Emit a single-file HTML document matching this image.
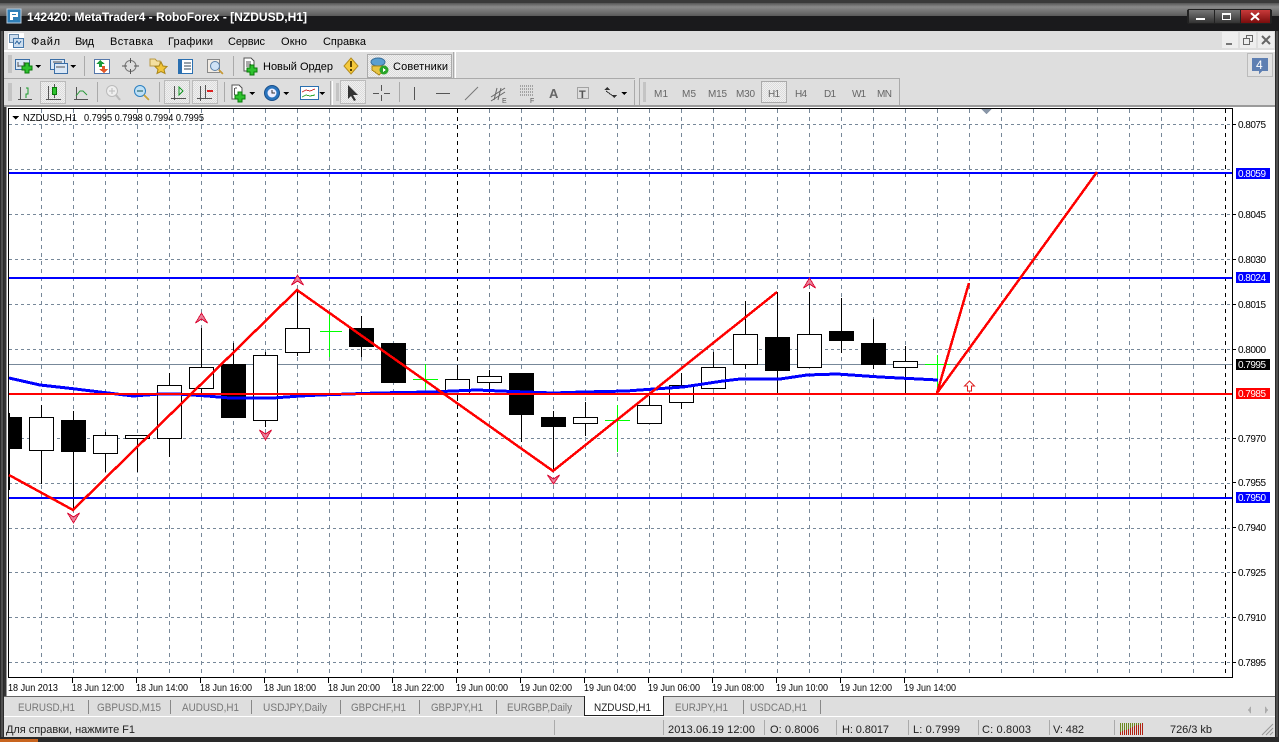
<!DOCTYPE html>
<html><head><meta charset="utf-8"><style>
html,body{margin:0;padding:0;background:#222;}
svg{display:block;}
text{font-family:"Liberation Sans",sans-serif;}
.m{font-size:11px;fill:#000;}
.p{font-size:10px;fill:#000;}
.t{font-size:10px;fill:#000;}
.tab{font-size:11px;fill:#777;}
.s{font-size:11px;fill:#222;}
.tf{font-size:10px;fill:#666;}
.w{fill:#fff;stroke:#000;stroke-width:1;}
.b{fill:#000;stroke:#000;stroke-width:1;}
</style></head><body>
<svg xmlns="http://www.w3.org/2000/svg" width="1279" height="742" viewBox="0 0 1279 742" shape-rendering="crispEdges">
<defs>
<linearGradient id="tb" x1="0" y1="0" x2="0" y2="1"><stop offset="0" stop-color="#555"/><stop offset=".3" stop-color="#8a8a8a"/><stop offset=".98" stop-color="#5c5c5c"/><stop offset="1" stop-color="#1e1e1e"/></linearGradient>
<pattern id="ck" width="2" height="2" patternUnits="userSpaceOnUse"><rect width="2" height="2" fill="#f0f0f0"/><rect width="1" height="1" fill="#dcdcdc"/><rect x="1" y="1" width="1" height="1" fill="#dcdcdc"/></pattern>
<linearGradient id="rd" x1="0" y1="0" x2="0" y2="1"><stop offset="0" stop-color="#c83a3a"/><stop offset="1" stop-color="#7a0c0c"/></linearGradient>
<linearGradient id="gb" x1="0" y1="0" x2="0" y2="1"><stop offset="0" stop-color="#777"/><stop offset="1" stop-color="#333"/></linearGradient>
</defs>
<rect width="1279" height="742" fill="#252525"/>
<rect x="0" y="0" width="1279" height="3" fill="#3a3a3a"/>
<rect x="0" y="3" width="1279" height="13" fill="url(#tb)"/>
<rect x="0" y="16" width="1279" height="15" fill="#1a1a1c"/>
<!-- title -->
<rect x="7" y="9" width="14" height="14" fill="#2f7fb8" stroke="#bcd" stroke-width="1"/>
<path d="M10 12h8v5h-5v3h-3z M12 14v1h4v-1z" fill="#fff" fill-rule="evenodd"/>
<text x="27" y="21" font-size="12" font-weight="bold" fill="#fff" textLength="280" lengthAdjust="spacingAndGlyphs">142420: MetaTrader4 - RoboForex - [NZDUSD,H1]</text>
<!-- window buttons -->
<rect x="1187" y="9" width="85" height="15" fill="#222" rx="2"/>
<rect x="1189" y="10" width="25" height="13" fill="url(#gb)"/>
<rect x="1196" y="18" width="9" height="2" fill="#fff"/>
<rect x="1215" y="10" width="25" height="13" fill="url(#gb)"/>
<rect x="1222.500" y="13.500" width="8" height="6" fill="none" stroke="#fff" stroke-width="1"/><rect x="1222" y="13" width="9" height="2" fill="#fff"/>
<rect x="1241" y="10" width="29" height="13" fill="url(#rd)"/>
<path d="M1251 13l8 7M1259 13l-8 7" stroke="#fff" stroke-width="2" fill="none" shape-rendering="auto"/>
<!-- menu bar -->
<rect x="4" y="31" width="1271" height="20" fill="#dedede"/>
<rect x="4" y="50" width="1271" height="2" fill="#fff"/>
<rect x="8" y="33" width="16" height="16" fill="#fff"/>
<rect x="9.500" y="34.500" width="9" height="8" fill="#cde" stroke="#68a" stroke-width="1"/>
<rect x="13.500" y="38.500" width="10" height="9" fill="#cde" stroke="#47a" stroke-width="1"/>
<path d="M15 44l2-3 2 3 2-3" stroke="#47a" fill="none"/>
<text class="m" x="31" y="45" textLength="29">Файл</text>
<text class="m" x="75" y="45" textLength="19">Вид</text>
<text class="m" x="110" y="45" textLength="43">Вставка</text>
<text class="m" x="168" y="45" textLength="45">Графики</text>
<text class="m" x="228" y="45" textLength="37">Сервис</text>
<text class="m" x="281" y="45" textLength="26">Окно</text>
<text class="m" x="323" y="45" textLength="43">Справка</text>
<rect x="1222" y="32" width="16" height="16" fill="#eee"/><rect x="1226" y="43" width="6" height="2" fill="#777"/>
<rect x="1240" y="32" width="16" height="16" fill="#eee"/><path d="M1243.500 38.500h6v6h-6zM1246.500 38.500v-3h6v6h-3" fill="none" stroke="#666"/>
<rect x="1258" y="32" width="16" height="16" fill="#eee"/><path d="M1262 36l8 8M1270 36l-8 8" stroke="#666" stroke-width="2" fill="none" shape-rendering="auto"/>
<!-- toolbars -->
<rect x="4" y="52" width="1271" height="53" fill="#dedede"/>
<rect x="4" y="105" width="1271" height="2" fill="#9a9a9a"/>
<rect x="4" y="78" width="451" height="1" fill="#aaa"/>
<rect x="455" y="52" width="1" height="26" fill="#fff"/>
<rect x="453" y="52" width="1" height="26" fill="#aaa"/>
<rect x="4" y="79" width="1271" height="1" fill="#dedede"/>
<!-- grippers -->
<path d="M8 56h4M8 58h4M8 60h4M8 62h4M8 64h4M8 66h4M8 68h4M8 70h4M8 72h4" stroke="#aaa"/>
<path d="M8 84h4M8 86h4M8 88h4M8 90h4M8 92h4M8 94h4M8 96h4M8 98h4M8 100h4" stroke="#aaa"/>
<!-- toolbar1 icons -->
<rect x="15.500" y="59.500" width="14" height="10" fill="#dbe8f6" stroke="#3b6ea5"/>
<path d="M18 62v5M24 62v5M18 66h8" stroke="#555"/>
<path d="M22 62h4v3h3v4h-3v3h-4v-3h-3v-4h3z" fill="#2ec22e" stroke="#0a7a0a" transform="translate(3,1)"/>
<path d="M35 65h6l-3 3z" fill="#000"/>
<rect x="50.500" y="59.500" width="14" height="10" fill="#dbe8f6" stroke="#3b6ea5"/>
<rect x="54.500" y="63.500" width="13" height="10" fill="#dbe8f6" stroke="#3b6ea5"/>
<path d="M53 62h9M56 67h9" stroke="#555"/>
<path d="M70 65h6l-3 3z" fill="#000"/>
<rect x="84" y="56" width="1" height="20" fill="#aaa"/>
<rect x="94.500" y="59.500" width="15" height="14" fill="#fff" stroke="#57a"/>
<path d="M100 60l-4 4h3v3h3v-3h3z" fill="#1a9a3a"/><path d="M104 73l4-4h-3v-3h-3v3h-3z" fill="#e0582a"/>
<circle cx="130.500" cy="66" r="5.500" fill="none" stroke="#777" shape-rendering="auto"/><path d="M130.500 58v5M130.500 69v5M122 66h5M134 66h5" stroke="#555"/>
<path d="M150 59h5l2 2h3v5h-10z" fill="#f3dfa0" stroke="#b99a45"/>
<path d="M161 62l2 4 4 .5-3 3 1 4-4-2-4 2 1-4-3-3 4-.5z" fill="#f2c53a" stroke="#a98518" shape-rendering="auto"/>
<rect x="178.500" y="59.500" width="14" height="14" fill="#fff" stroke="#2a6fb0"/><rect x="179" y="60" width="3" height="13" fill="#2a6fb0"/><path d="M184 63h7M184 66h7M184 69h7" stroke="#345"/>
<rect x="207.500" y="59.500" width="12" height="13" fill="#f2ece4" stroke="#888"/><circle cx="215" cy="66" r="4.500" fill="#cfe2f5" stroke="#5a7fa8" shape-rendering="auto"/><path d="M219 70l4 4" stroke="#c69a3a" stroke-width="2"/>
<rect x="233" y="56" width="1" height="20" fill="#aaa"/>
<path d="M244 58h7l3 3v10h-10z" fill="#fff" stroke="#555"/><path d="M246 62h5M246 64h5M246 66h5" stroke="#555"/>
<path d="M250 65h4v3h3v4h-3v3h-4v-3h-3v-4h3z" fill="#2ec22e" stroke="#0a7a0a"/>
<text class="m" x="263" y="70" textLength="70">Новый Ордер</text>
<path d="M351 58l7 8-7 8-7-8z" fill="#f5c93c" stroke="#b58d1e" shape-rendering="auto"/><rect x="350" y="61" width="2" height="6" fill="#5a4300"/><rect x="350" y="69" width="2" height="2" fill="#5a4300"/>
<rect x="367.500" y="54.500" width="84" height="23" fill="url(#ck)" stroke="#aaa"/>
<ellipse cx="378" cy="62" rx="7" ry="4" fill="#5b9fd0" stroke="#3a6f9a" shape-rendering="auto"/>
<path d="M372 66h13v4l-6 5-7-5z" fill="#e8c544" stroke="#a98518"/>
<circle cx="384" cy="70" r="4.500" fill="#2aa52a" shape-rendering="auto"/><path d="M383 68l3 2-3 2z" fill="#fff"/>
<text class="m" x="393" y="70" textLength="55">Советники</text>
<!-- notif -->
<rect x="1247.500" y="53.500" width="25" height="23" fill="#e2e2e2" stroke="#bbb"/>
<path d="M1252 58h16v13h-6l-3 3v-3h-7z" fill="#5e7fb2"/>
<text x="1256" y="69" font-size="12" fill="#fff">4</text>
<!-- toolbar2 icons -->
<path d="M20.500 87v13M18 99.500h14" stroke="#555" fill="none"/><path d="M26 88h2v6h-2v4" stroke="#1a9a2a" fill="none"/>
<rect x="40.500" y="81.500" width="25" height="22" fill="url(#ck)" stroke="#bbb"/>
<path d="M48.500 86v14M46 99.500h15M54.500 84v14" stroke="#555" fill="none"/><rect x="52.500" y="87.500" width="4" height="7" fill="#2ec22e" stroke="#0a7a0a"/>
<path d="M76.500 87v13M74 99.500h14" stroke="#555"/><path d="M76 96l4-5 3 0 4 4" stroke="#2a9a3a" fill="none" shape-rendering="auto"/>
<rect x="97" y="82" width="1" height="20" fill="#aaa"/>
<circle cx="112" cy="91" r="5.500" fill="#eee" stroke="#bbb" shape-rendering="auto"/><path d="M109 91h6M112 88v6" stroke="#bbb"/><path d="M116 95l4 5" stroke="#bbb" stroke-width="2"/>
<circle cx="140" cy="91" r="5.500" fill="#bfe0f5" stroke="#2a7fc0" shape-rendering="auto"/><path d="M137 91h6" stroke="#155"/><path d="M144 95l5 5" stroke="#c9a43a" stroke-width="2"/>
<rect x="159" y="82" width="1" height="20" fill="#aaa"/>
<rect x="164.500" y="80.500" width="25" height="23" fill="url(#ck)" stroke="#bbb"/>
<path d="M174.500 86v14M171 98.500h15" stroke="#555"/><path d="M179 87l4 4-4 4z" fill="none" stroke="#1a9a2a"/>
<rect x="192.500" y="80.500" width="25" height="23" fill="url(#ck)" stroke="#bbb"/>
<path d="M200.500 86v15M197 98.500h15M205.500 85v13" stroke="#555"/><path d="M207 91h6" stroke="#d22" stroke-width="2"/>
<rect x="224" y="82" width="1" height="20" fill="#aaa"/>
<path d="M232 85h7l3 3v11h-10z" fill="#fff" stroke="#555"/><path d="M235 88h2M234.500 88v7" stroke="#555"/>
<path d="M238 92h4v3h3v4h-3v3h-4v-3h-3v-4h3z" fill="#2ec22e" stroke="#0a7a0a"/>
<path d="M249 92h6l-3 3z" fill="#000"/>
<circle cx="272" cy="93" r="7.500" fill="#2a74bd" stroke="#1a4f8a" shape-rendering="auto"/><circle cx="272" cy="93" r="4.500" fill="#eef" shape-rendering="auto"/><path d="M272 90v3h3" stroke="#333" fill="none"/>
<path d="M283 92h6l-3 3z" fill="#000"/>
<rect x="300.500" y="86.500" width="18" height="13" fill="#fff" stroke="#2a6fb0"/><path d="M302 92l4-2 4 1 5-2" stroke="#c33" fill="none"/><path d="M302 97l4-2 4 1 5-1" stroke="#3a3" fill="none"/>
<path d="M319 92h6l-3 3z" fill="#000"/>
<rect x="330" y="81" width="1" height="24" fill="#aaa"/>
<rect x="332" y="81" width="1" height="24" fill="#fff"/>
<path d="M336 84h3M336 86h3M336 88h3M336 90h3M336 92h3M336 94h3M336 96h3M336 98h3M336 100h3" stroke="#aaa"/>
<rect x="340.500" y="80.500" width="25" height="23" fill="url(#ck)" stroke="#bbb"/>
<path d="M348 85l0 14 3-3 3 5 2-1-3-5 5 0z" fill="#333" shape-rendering="auto"/>
<path d="M381.500 85v6M381.500 95v6M373 93.500h6M384 93.500h6" stroke="#555"/>
<rect x="399" y="82" width="1" height="20" fill="#aaa"/>
<path d="M414.500 87v13" stroke="#555"/>
<path d="M436 93.500h14" stroke="#555"/>
<path d="M465 100l13-13" stroke="#777" shape-rendering="auto"/>
<path d="M491 97l14-9M491 101l14-9M494 100l3-12M498 100l3-12" stroke="#666" fill="none" shape-rendering="auto"/><text x="502" y="103" font-size="7" fill="#555">E</text>
<path d="M520 86h13M520 89h13M520 92h13M520 95h13" stroke="#666" stroke-dasharray="1 1"/><text x="530" y="103" font-size="7" fill="#555">F</text>
<text x="549" y="98" font-size="13" font-weight="bold" fill="#666">A</text>
<rect x="577.500" y="87.500" width="11" height="11" fill="none" stroke="#666" stroke-dasharray="1 1"/><text x="579" y="98" font-size="11" font-weight="bold" fill="#555">T</text>
<path d="M607 87l3 3h-6zM614 98l3-3h-6z" fill="#333"/><path d="M606 91l7 5" stroke="#333"/>
<path d="M621 92h6l-3 3z" fill="#000"/>
<rect x="634" y="80" width="1" height="25" fill="#aaa"/>
<rect x="639" y="79" width="1" height="26" fill="#aaa"/>
<rect x="899" y="79" width="1" height="26" fill="#aaa"/>
<rect x="639" y="78" width="261" height="1" fill="#aaa"/>
<rect x="4" y="78" width="631" height="1" fill="#aaa"/>
<path d="M643 83h3M643 85h3M643 87h3M643 89h3M643 91h3M643 93h3M643 95h3M643 97h3M643 99h3M643 101h3" stroke="#aaa"/>
<rect x="761.500" y="81.500" width="25" height="21" fill="url(#ck)" stroke="#aaa"/>
<text class="tf" x="654" y="97" textLength="14">M1</text>
<text class="tf" x="682" y="97" textLength="14">M5</text>
<text class="tf" x="708" y="97" textLength="19">M15</text>
<text class="tf" x="736" y="97" textLength="19">M30</text>
<text class="tf" x="768" y="97" textLength="12">H1</text>
<text class="tf" x="795" y="97" textLength="12">H4</text>
<text class="tf" x="824" y="97" textLength="12">D1</text>
<text class="tf" x="852" y="97" textLength="14">W1</text>
<text class="tf" x="877" y="97" textLength="15">MN</text>
<!-- chart background -->
<rect x="4" y="107" width="1271" height="590" fill="#fff"/>
<rect x="0" y="31" width="4" height="711" fill="#2a2a2a"/>
<rect x="1275" y="31" width="4" height="711" fill="#2a2a2a"/>
<rect x="1.500" y="31" width="1" height="711" fill="#777"/>
<rect x="1276.500" y="31" width="1" height="711" fill="#777"/>
<rect x="4" y="107" width="2" height="590" fill="#333"/>
<rect x="6" y="107" width="1" height="590" fill="#999"/>
<rect x="8.500" y="108.500" width="1224" height="569" fill="#fff" stroke="#000"/>
<!-- grid -->
<path stroke="#778899" stroke-dasharray="3 3" fill="none" d="M9 124.500H1232M9 169.500H1232M9 214.500H1232M9 259.500H1232M9 304.500H1232M9 349.500H1232M9 393.500H1232M9 438.500H1232M9 483.500H1232M9 528.500H1232M9 572.500H1232M9 617.500H1232M9 662.500H1232"/>
<path stroke="#778899" stroke-dasharray="4 4" fill="none" d="M41.500 109V677M73.500 109V677M105.500 109V677M137.500 109V677M169.500 109V677M201.500 109V677M233.500 109V677M265.500 109V677M297.500 109V677M329.500 109V677M361.500 109V677M393.500 109V677M425.500 109V677M489.500 109V677M521.500 109V677M553.500 109V677M585.500 109V677M617.500 109V677M649.500 109V677M681.500 109V677M713.500 109V677M745.500 109V677M777.500 109V677M809.500 109V677M841.500 109V677M873.500 109V677M905.500 109V677M937.500 109V677M969.500 109V677M1001.500 109V677M1033.500 109V677M1065.500 109V677M1097.500 109V677M1129.500 109V677M1161.500 109V677M1193.500 109V677"/>
<path stroke="#000" stroke-dasharray="4 4" fill="none" d="M457.500 109V677M1225.500 109V677"/>
<!-- price line -->
<rect x="9" y="364" width="1223" height="1" fill="#778899"/>
<!-- candles wicks -->
<path stroke="#000" fill="none" d="M9.500 413V490M41.500 405V484M73.500 411V510M105.500 432V472M137.500 435V472M169.500 373V457M201.500 328V393M233.500 343V418M265.500 352V427M297.500 290V356M361.500 316V357M457.500 367V399M489.500 370V393M521.500 373V442M553.500 411V470M585.500 402V436M649.500 396V424M681.500 373V409M713.500 352V388M745.500 301V369M777.500 292V394M809.500 292V367M841.500 298V353M873.500 319V369M905.500 346V394"/>
<!-- doji -->
<path stroke="#00ff00" fill="none" d="M320 331.500H342M329.500 313V357M413 379.500H438M425.500 364V389M605 420.500H630M617.500 405V452M925 364.500H950M937.500 355V392"/>
<!-- bodies -->
<rect class="b" x="9.500" y="417.500" width="12" height="31"/>
<rect class="w" x="29.500" y="417.500" width="24" height="33"/>
<rect class="b" x="61.500" y="420.500" width="24" height="31"/>
<rect class="w" x="93.500" y="435.500" width="24" height="18"/>
<rect class="w" x="125.500" y="435.500" width="24" height="3"/>
<rect class="w" x="157.500" y="385.500" width="24" height="53"/>
<rect class="w" x="189.500" y="367.500" width="24" height="21"/>
<rect class="b" x="221.500" y="364.500" width="24" height="53"/>
<rect class="w" x="253.500" y="355.500" width="24" height="65"/>
<rect class="w" x="285.500" y="328.500" width="24" height="24"/>
<rect class="b" x="349.500" y="328.500" width="24" height="18"/>
<rect class="b" x="381.500" y="343.500" width="24" height="39"/>
<rect class="w" x="445.500" y="379.500" width="24" height="14"/>
<rect class="w" x="477.500" y="376.500" width="24" height="6"/>
<rect class="b" x="509.500" y="373.500" width="24" height="41"/>
<rect class="b" x="541.500" y="417.500" width="24" height="9"/>
<rect class="w" x="573.500" y="417.500" width="24" height="6"/>
<rect class="w" x="637.500" y="405.500" width="24" height="18"/>
<rect class="w" x="669.500" y="385.500" width="24" height="17"/>
<rect class="w" x="701.500" y="367.500" width="24" height="21"/>
<rect class="w" x="733.500" y="334.500" width="24" height="30"/>
<rect class="b" x="765.500" y="337.500" width="24" height="33"/>
<rect class="w" x="797.500" y="334.500" width="24" height="33"/>
<rect class="b" x="829.500" y="331.500" width="24" height="9"/>
<rect class="b" x="861.500" y="343.500" width="24" height="21"/>
<rect class="w" x="893.500" y="361.500" width="24" height="6"/>
<!-- blue levels -->
<rect x="9" y="172" width="1223" height="2" fill="#0000ff"/>
<rect x="9" y="277" width="1223" height="2" fill="#0000ff"/>
<rect x="9" y="497" width="1223" height="2" fill="#0000ff"/>
<!-- MA -->
<polyline fill="none" stroke="#0000ff" stroke-width="3" points="9,378 40,385 67,388 100,392 133,396 160,394 177,394 207,396 230,398 273,398 300,396 320,395 377,393 430,392 477,390 500,391 553,393 583,392 627,391 640,390 683,387 723,381 740,379 780,379 807,375 837,374 880,377 938,380"/>
<!-- red -->
<rect x="9" y="393" width="1223" height="2" fill="#ff0000"/>
<polyline fill="none" stroke="#ff0000" stroke-width="2.500" points="9,475 73,510 297,290 553,471 777,292"/>
<polyline fill="none" stroke="#ff0000" stroke-width="2.500" points="969,283 937,393 1097,172"/>
<!-- arrows -->
<g fill="#e8809a" stroke="#dc143c" stroke-width="1">
<path d="M297.500 275l6 10-6-4-6 4z"/>
<path d="M201.500 313l6 10-6-4-6 4z"/>
<path d="M809.500 278l6 10-6-4-6 4z"/>
<path d="M73.500 523l6-10-6 4-6-4z"/>
<path d="M265.500 440l6-10-6 4-6-4z"/>
<path d="M553.500 484l6-9-6 4-6-4z"/>
</g>
<path d="M969.500 381l5 5h-3v5h-4v-5h-3z" fill="#fff" stroke="#dc2020" shape-rendering="auto"/>
<!-- ohlc label -->
<path d="M12 116h7l-3.500 3.500z" fill="#000"/>
<text x="23" y="121" font-size="10" fill="#000" textLength="54" lengthAdjust="spacingAndGlyphs">NZDUSD,H1</text>
<text x="84" y="121" font-size="10" fill="#000" textLength="120" lengthAdjust="spacingAndGlyphs">0.7995 0.7998 0.7994 0.7995</text>
<!-- shift triangle -->
<path d="M981 109h11l-5.500 5z" fill="#8a97a8"/>
<!-- axis ticks -->
<path stroke="#000" d="M1233 124.500h3M1233 214.500h3M1233 259.500h3M1233 304.500h3M1233 349.500h3M1233 438.500h3M1233 482.500h3M1233 527.500h3M1233 572.500h3M1233 617.500h3M1233 662.500h3"/>
<text class="p" x="1238" y="128" textLength="28">0.8075</text>
<text class="p" x="1238" y="218" textLength="28">0.8045</text>
<text class="p" x="1238" y="263" textLength="28">0.8030</text>
<text class="p" x="1238" y="308" textLength="28">0.8015</text>
<text class="p" x="1238" y="353" textLength="28">0.8000</text>
<text class="p" x="1238" y="442" textLength="28">0.7970</text>
<text class="p" x="1238" y="486" textLength="28">0.7955</text>
<text class="p" x="1238" y="531" textLength="28">0.7940</text>
<text class="p" x="1238" y="576" textLength="28">0.7925</text>
<text class="p" x="1238" y="621" textLength="28">0.7910</text>
<text class="p" x="1238" y="666" textLength="28">0.7895</text>
<rect x="1236" y="168" width="34" height="11" fill="#0000ff"/><text class="p" style="fill:#fff" x="1238" y="177" textLength="28">0.8059</text>
<rect x="1236" y="272" width="34" height="11" fill="#0000ff"/><text class="p" style="fill:#fff" x="1238" y="281" textLength="28">0.8024</text>
<rect x="1236" y="359" width="34" height="11" fill="#000"/><text class="p" style="fill:#fff" x="1238" y="368" textLength="28">0.7995</text>
<rect x="1236" y="388" width="34" height="11" fill="#ff0000"/><text class="p" style="fill:#fff" x="1238" y="397" textLength="28">0.7985</text>
<rect x="1236" y="492" width="34" height="11" fill="#0000ff"/><text class="p" style="fill:#fff" x="1238" y="501" textLength="28">0.7950</text>
<!-- time ticks -->
<path stroke="#000" d="M72.500 678v5M136.500 678v5M200.500 678v5M264.500 678v5M328.500 678v5M392.500 678v5M456.500 678v5M520.500 678v5M584.500 678v5M648.500 678v5M712.500 678v5M776.500 678v5M840.500 678v5M904.500 678v5"/>
<text class="t" x="8" y="691" textLength="50" lengthAdjust="spacingAndGlyphs">18 Jun 2013</text>
<text class="t" x="72" y="691" textLength="52" lengthAdjust="spacingAndGlyphs">18 Jun 12:00</text>
<text class="t" x="136" y="691" textLength="52" lengthAdjust="spacingAndGlyphs">18 Jun 14:00</text>
<text class="t" x="200" y="691" textLength="52" lengthAdjust="spacingAndGlyphs">18 Jun 16:00</text>
<text class="t" x="264" y="691" textLength="52" lengthAdjust="spacingAndGlyphs">18 Jun 18:00</text>
<text class="t" x="328" y="691" textLength="52" lengthAdjust="spacingAndGlyphs">18 Jun 20:00</text>
<text class="t" x="392" y="691" textLength="52" lengthAdjust="spacingAndGlyphs">18 Jun 22:00</text>
<text class="t" x="456" y="691" textLength="52" lengthAdjust="spacingAndGlyphs">19 Jun 00:00</text>
<text class="t" x="520" y="691" textLength="52" lengthAdjust="spacingAndGlyphs">19 Jun 02:00</text>
<text class="t" x="584" y="691" textLength="52" lengthAdjust="spacingAndGlyphs">19 Jun 04:00</text>
<text class="t" x="648" y="691" textLength="52" lengthAdjust="spacingAndGlyphs">19 Jun 06:00</text>
<text class="t" x="712" y="691" textLength="52" lengthAdjust="spacingAndGlyphs">19 Jun 08:00</text>
<text class="t" x="776" y="691" textLength="52" lengthAdjust="spacingAndGlyphs">19 Jun 10:00</text>
<text class="t" x="840" y="691" textLength="52" lengthAdjust="spacingAndGlyphs">19 Jun 12:00</text>
<text class="t" x="904" y="691" textLength="52" lengthAdjust="spacingAndGlyphs">19 Jun 14:00</text>
<!-- tabs -->
<rect x="4" y="697" width="1271" height="20" fill="#dedede"/>
<rect x="4" y="696" width="1271" height="1" fill="#666"/>
<rect x="4" y="716" width="1271" height="1" fill="#fff"/>
<path d="M88.500 700v14M170.500 700v14M251.500 700v14M340.500 700v14M419.500 700v14M496.500 700v14M743.500 700v14M820.500 700v14" stroke="#888"/>
<rect x="584.500" y="696.500" width="79" height="19" fill="#fff" stroke="#222"/><rect x="585" y="695" width="78" height="2" fill="#fff"/>
<text class="tab" x="18" y="711" textLength="57" lengthAdjust="spacingAndGlyphs">EURUSD,H1</text>
<text class="tab" x="97" y="711" textLength="64" lengthAdjust="spacingAndGlyphs">GBPUSD,M15</text>
<text class="tab" x="182" y="711" textLength="57" lengthAdjust="spacingAndGlyphs">AUDUSD,H1</text>
<text class="tab" x="263" y="711" textLength="64" lengthAdjust="spacingAndGlyphs">USDJPY,Daily</text>
<text class="tab" x="351" y="711" textLength="55" lengthAdjust="spacingAndGlyphs">GBPCHF,H1</text>
<text class="tab" x="431" y="711" textLength="52" lengthAdjust="spacingAndGlyphs">GBPJPY,H1</text>
<text class="tab" x="507" y="711" textLength="65" lengthAdjust="spacingAndGlyphs">EURGBP,Daily</text>
<text class="tab" style="fill:#222" x="594" y="711" textLength="57" lengthAdjust="spacingAndGlyphs">NZDUSD,H1</text>
<text class="tab" x="675" y="711" textLength="53" lengthAdjust="spacingAndGlyphs">EURJPY,H1</text>
<text class="tab" x="750" y="711" textLength="57" lengthAdjust="spacingAndGlyphs">USDCAD,H1</text>
<path d="M1251 714l-3-4 3-4z" fill="#aaa"/><path d="M1265 706l3 4-3 4z" fill="#aaa"/>
<!-- status -->
<rect x="4" y="717" width="1271" height="20" fill="#dedede"/>
<rect x="0" y="737" width="1279" height="5" fill="#2a2a2a"/>
<rect x="0" y="739" width="38" height="3" fill="#c8641e"/>
<path d="M554.500 720v15M663.500 720v15M764.500 720v15M836.500 720v15M908.500 720v15M978.500 720v15M1049.500 720v15M1114.500 720v15" stroke="#aaa"/>
<text class="s" x="6" y="733" textLength="129">Для справки, нажмите F1</text>
<text class="s" x="668" y="733" textLength="87">2013.06.19 12:00</text>
<text class="s" x="770" y="733" textLength="49">O: 0.8006</text>
<text class="s" x="842" y="733" textLength="47">H: 0.8017</text>
<text class="s" x="913" y="733" textLength="47">L: 0.7999</text>
<text class="s" x="982" y="733" textLength="49">C: 0.8003</text>
<text class="s" x="1053" y="733" textLength="31">V: 482</text>
<text class="s" x="1170" y="733" textLength="42">726/3 kb</text>
<!-- conn bars -->
<rect x="1120" y="723" width="23" height="12" fill="#6b8a1e"/>
<path d="M1121.500 723v12M1123.500 723v12M1125.500 723v12M1127.500 723v12M1129.500 723v12M1131.500 723v12M1133.500 723v12M1135.500 723v12M1137.500 723v12M1139.500 723v12M1141.500 723v12" stroke="#dedede"/>
<path d="M1120.500 732v3M1122.500 731v4M1124.500 730v5M1126.500 730v5M1128.500 729v6M1130.500 728v7M1132.500 727v8M1134.500 726v9M1136.500 725v10M1138.500 725v10M1140.500 724v11M1142.500 723v12" stroke="#b02010"/>
<!-- grip -->
<path d="M1262 735l11-11M1266 735l7-7M1270 735l3-3" stroke="#999" shape-rendering="auto"/>
</svg>
</body></html>
